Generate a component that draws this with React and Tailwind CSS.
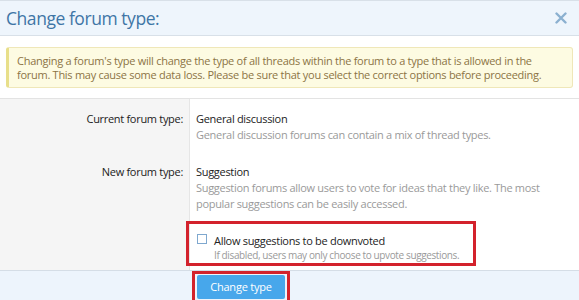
export default function App() {
  return (
    <div className="w-[579px] h-[300px] bg-white overflow-hidden relative flex flex-col" style={{ fontFamily: '"Open Sans", "Noto Sans", sans-serif' }}>
      <div className="h-[36px] shrink-0 bg-[#eef5fc] border-t border-b border-[#d8e0e8] flex items-center justify-between pl-[6px] pr-[10px]">
        <span className="text-[17.5px] text-[#3f76a6] tracking-[-0.45px] leading-none mt-[1px]">Change forum type:</span>
        <svg width="12" height="12" viewBox="0 0 12 12" className="mr-[2px]">
          <path d="M1.5 1.5 L10.5 10.5 M10.5 1.5 L1.5 10.5" stroke="#8bb0d0" strokeWidth="2.4" strokeLinecap="round" />
        </svg>
      </div>
      <div className="px-[6px] pt-[11px] pb-[10px] shrink-0">
        <div className="h-[41px] bg-[#fdfbe2] border border-[#efe7b8] border-l-[3px] border-l-[#e8df8a] rounded-[3px] pl-[8px] pr-[30px] pt-[6px] text-[11px] leading-[14px] text-[#8c7445] tracking-[-0.27px] whitespace-nowrap">
          Changing a forum's type will change the type of all threads within the forum to a type that is allowed in the<br />forum. This may cause some data loss. Please be sure that you select the correct options before proceeding.
        </div>
      </div>
      <div className="flex-1 flex border-t border-[#e3e3e3]">
        <div className="w-[190px] shrink-0 bg-[#f5f5f5] border-r border-[#e6e6e6] text-[11px] text-[#222] tracking-[-0.3px] text-right pr-[6px]">
          <div className="pt-[12px] leading-[16px]">Current forum type:</div>
          <div className="pt-[37px] leading-[16px]">New forum type:</div>
        </div>
        <div className="flex-1 pl-[6px] tracking-[-0.3px]">
          <div className="pt-[12px] text-[11px] leading-[16px] text-[#222]">General discussion</div>
          <div className="text-[11px] leading-[16px] text-[#9a9a9a]">General discussion forums can contain a mix of thread types.</div>
          <div className="pt-[21px] text-[11px] leading-[16px] text-[#222]">Suggestion</div>
          <div className="text-[11px] leading-[16px] text-[#9a9a9a] pr-[20px]">Suggestion forums allow users to vote for ideas that they like. The most<br />popular suggestions can be easily accessed.</div>
          <div className="mt-[9px] -ml-[10px] w-[290px] h-[45px] border-[3px] border-[#d3222c] flex items-start pl-[8px] pt-[9px] gap-[7px]">
            <div className="w-[10px] h-[10px] border border-[#7fa8cf] bg-white mt-[1px] shrink-0" />
            <div>
              <div className="text-[11px] leading-[15px] text-[#222]">Allow suggestions to be downvoted</div>
              <div className="text-[10px] leading-[14px] text-[#9a9a9a] tracking-[-0.38px]">If disabled, users may only choose to upvote suggestions.</div>
            </div>
          </div>
        </div>
      </div>
      <div className="h-[30px] shrink-0 bg-[#edf4fc] border-t border-[#d5dde6] pl-[192px]">
        <div className="w-[98px] h-[30px] border-[3px] border-b-0 border-[#d3222c] pt-[1px] pl-[2px]">
          <div className="w-[88px] h-[24px] bg-[#47a7eb] rounded-[2px] flex items-center justify-center text-white text-[11px] tracking-[-0.2px]">Change type</div>
        </div>
      </div>
    </div>
  );
}
